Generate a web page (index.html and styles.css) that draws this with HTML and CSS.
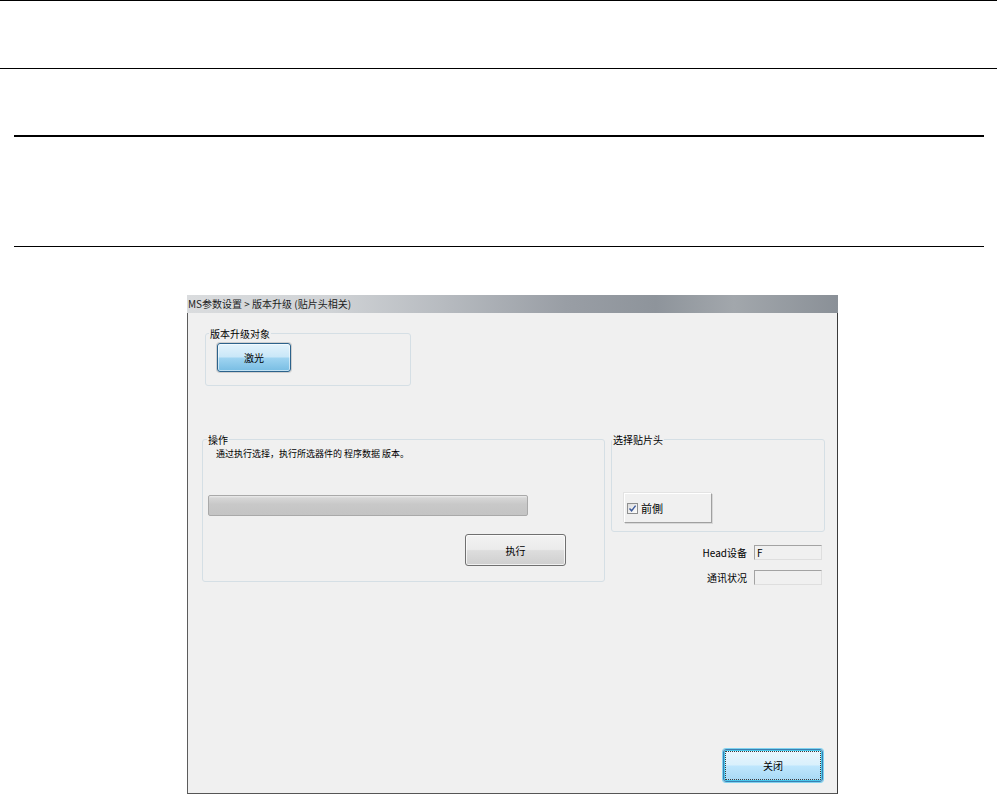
FILE: index.html
```html
<!DOCTYPE html>
<html lang="zh">
<head>
<meta charset="utf-8">
<title>MS参数设置 &gt; 版本升级</title>
<link rel="stylesheet" href="styles.css">
</head>
<body>
<div class="rule rule-top"></div>
<div class="rule rule-second"></div>
<div class="doc">
  <div class="rule rule-thick"></div>
  <div class="rule rule-thin"></div>
</div>

<div class="window">
  <div class="titlebar">MS参数设置 &gt; 版本升级 (贴片头相关)</div>
  <div class="client">
    <fieldset class="group g-target">
      <legend>版本升级对象</legend>
      <button class="btn btn-blue btn-laser">激光</button>
    </fieldset>

    <div class="row">
      <fieldset class="group g-op">
        <legend>操作</legend>
        <p class="desc">通过执行选择，执行所选器件的 程序数据 版本。</p>
        <div class="progress"></div>
        <div class="op-actions">
          <button class="btn btn-std btn-exec">执行</button>
        </div>
      </fieldset>

      <div class="side">
        <fieldset class="group g-head">
          <legend>选择贴片头</legend>
          <label class="toggle">
            <span class="check"><svg viewBox="0 0 9 9" width="9" height="9"><path d="M1.5 4.5 L3.6 6.8 L7.6 1.6" fill="none" stroke="#3d5a9c" stroke-width="1.4"/></svg></span>
            <span>前側</span>
          </label>
        </fieldset>
        <div class="status">
          <div class="status-row"><span class="status-label">Head设备</span><span class="field">F</span></div>
          <div class="status-row"><span class="status-label">通讯状况</span><span class="field"></span></div>
        </div>
      </div>
    </div>

    <div class="footer">
      <button class="btn btn-close">关闭</button>
    </div>
  </div>
</div>
</body>
</html>
```

FILE: styles.css
```css
html, body {
  margin: 0;
  padding: 0;
  background: #ffffff;
  overflow: hidden;
}
body {
  font-family: "Noto Sans CJK SC", "Liberation Sans", sans-serif;
  font-size: 10px;
  color: #000;
}

.rule {
  border-top: 1px solid #000;
  height: 0;
}
.rule-top {
  margin-bottom: 67px;
}
.doc {
  margin: 66px 13px 0 14px;
}
.rule-thick {
  border-top-width: 2px;
}
.rule-thin {
  margin-top: 109px;
}

.window {
  margin: 48px 0 0 187px;
  width: 651px;
}
.titlebar {
  height: 18px;
  line-height: 18px;
  padding-left: 1px;
  font-size: 10px;
  color: #1c1c1c;
  white-space: nowrap;
  background: linear-gradient(90deg, #dadcde 0%, #d0d3d6 22%, #b6babf 40%, #999ea5 58%, #8e949b 72%, #a2a7ac 84%, #8a9097 100%);
}
.client {
  box-sizing: content-box;
  height: 480px;
  background: #f0f0f0;
  border-left: 1px solid #5c5c5c;
  border-right: 1px solid #3a3a3a;
  border-bottom: 1px solid #555;
  display: flex;
  flex-direction: column;
  align-items: flex-start;
}

.group {
  margin: 0;
  padding: 0;
  border: 1px solid #d5dfe5;
  border-radius: 3px;
  box-sizing: border-box;
  min-width: 0;
}
.group legend {
  height: 13px;
  line-height: 13px;
  padding: 0 1px;
  margin-left: 3px;
  font-size: 10px;
  white-space: nowrap;
}

.g-target {
  margin: 14px 0 0 17px;
  width: 206px;
  padding: 3px 0 13px 0;
}
.g-target .btn-laser {
  margin-left: 11px;
}

.btn {
  font-family: inherit;
  font-size: 10px;
  color: #000;
  box-sizing: border-box;
  border-radius: 3px;
  padding: 0;
  margin: 0;
  display: block;
}
.btn-laser {
  width: 74px;
  height: 29px;
  border: 1px solid #2c628b;
  background: linear-gradient(#e3f3fc 0%, #c9e7f8 48%, #9fd4f1 52%, #78bde3 100%);
  box-shadow: inset 0 0 0 1px rgba(255,255,255,0.55), 0 0 0 1px #cfcfcf;
}

.row {
  display: flex;
  align-items: flex-start;
  gap: 6px;
  margin: 47px 0 0 14px;
}
.g-op {
  width: 403px;
  padding: 2px 0 15px 0;
}
.g-op legend {
  margin-left: 4px;
}
.desc {
  margin: 0 0 0 13px;
  height: 12px;
  line-height: 12px;
  font-size: 9px;
  white-space: pre;
}
.progress {
  margin: 35px 0 0 5px;
  width: 320px;
  height: 21px;
  box-sizing: border-box;
  border: 1px solid #a9a9a9;
  border-radius: 2px;
  background: linear-gradient(#ececec 0, #d6d6d6 2px, #c8c8c8 45%, #c4c4c4 100%);
}
.op-actions {
  margin: 18px 0 0 262px;
}
.btn-std {
  width: 101px;
  height: 32px;
  border: 1px solid #707070;
  background: linear-gradient(#f2f2f2 0%, #ebebeb 48%, #dddddd 52%, #cfcfcf 100%);
  box-shadow: inset 0 0 0 1px rgba(255,255,255,0.7);
}

.side {
  width: 214px;
  display: flex;
  flex-direction: column;
}
.g-head {
  width: 214px;
  padding: 47px 0 8px 0;
}
.g-head legend {
  margin-left: 0;
}
.toggle {
  box-sizing: border-box;
  width: 88px;
  height: 30px;
  margin-left: 12px;
  display: flex;
  align-items: center;
  gap: 3px;
  padding-left: 2px;
  font-size: 11px;
  background: #f0f0f0;
  border-top: 1px solid #ffffff;
  border-left: 1px solid #ffffff;
  border-right: 1px solid #a0a0a0;
  border-bottom: 1px solid #a0a0a0;
  box-shadow: 1px 1px 0 #d8d8d8, -1px -1px 0 #e3e3e3;
}
.check {
  width: 9px;
  height: 9px;
  border: 1px solid #8e8f8f;
  background: linear-gradient(135deg, #dcdcdc, #ffffff);
  display: flex;
}
.check svg {
  display: block;
}

.status {
  margin-top: 13px;
  display: flex;
  flex-direction: column;
  gap: 10px;
  padding-right: 3px;
}
.status-row {
  display: flex;
  justify-content: flex-end;
  align-items: center;
  gap: 7px;
  height: 15px;
}
.status-label {
  line-height: 12px;
  white-space: nowrap;
}
.field {
  box-sizing: border-box;
  width: 68px;
  height: 15px;
  line-height: 13px;
  padding-left: 2px;
  font-size: 10px;
  border-style: solid;
  border-width: 1px;
  border-color: #a3a3a3 #dedede #dedede #a3a3a3;
  background: #f0f0f0;
}

.footer {
  margin-top: auto;
  align-self: flex-end;
  margin-right: 14px;
  margin-bottom: 11px;
}
.btn-close {
  width: 100px;
  height: 33px;
  border: 1px solid #3c7fb1;
  background: linear-gradient(#eaf6fd 0%, #d9f0fc 48%, #bee6fd 52%, #a7d9f5 100%);
  box-shadow: 0 0 0 1px #7fd3f0, inset 0 0 0 1px #48c8ec;
  outline: 1px dotted #3a3a3a;
  outline-offset: -3px;
}
```
